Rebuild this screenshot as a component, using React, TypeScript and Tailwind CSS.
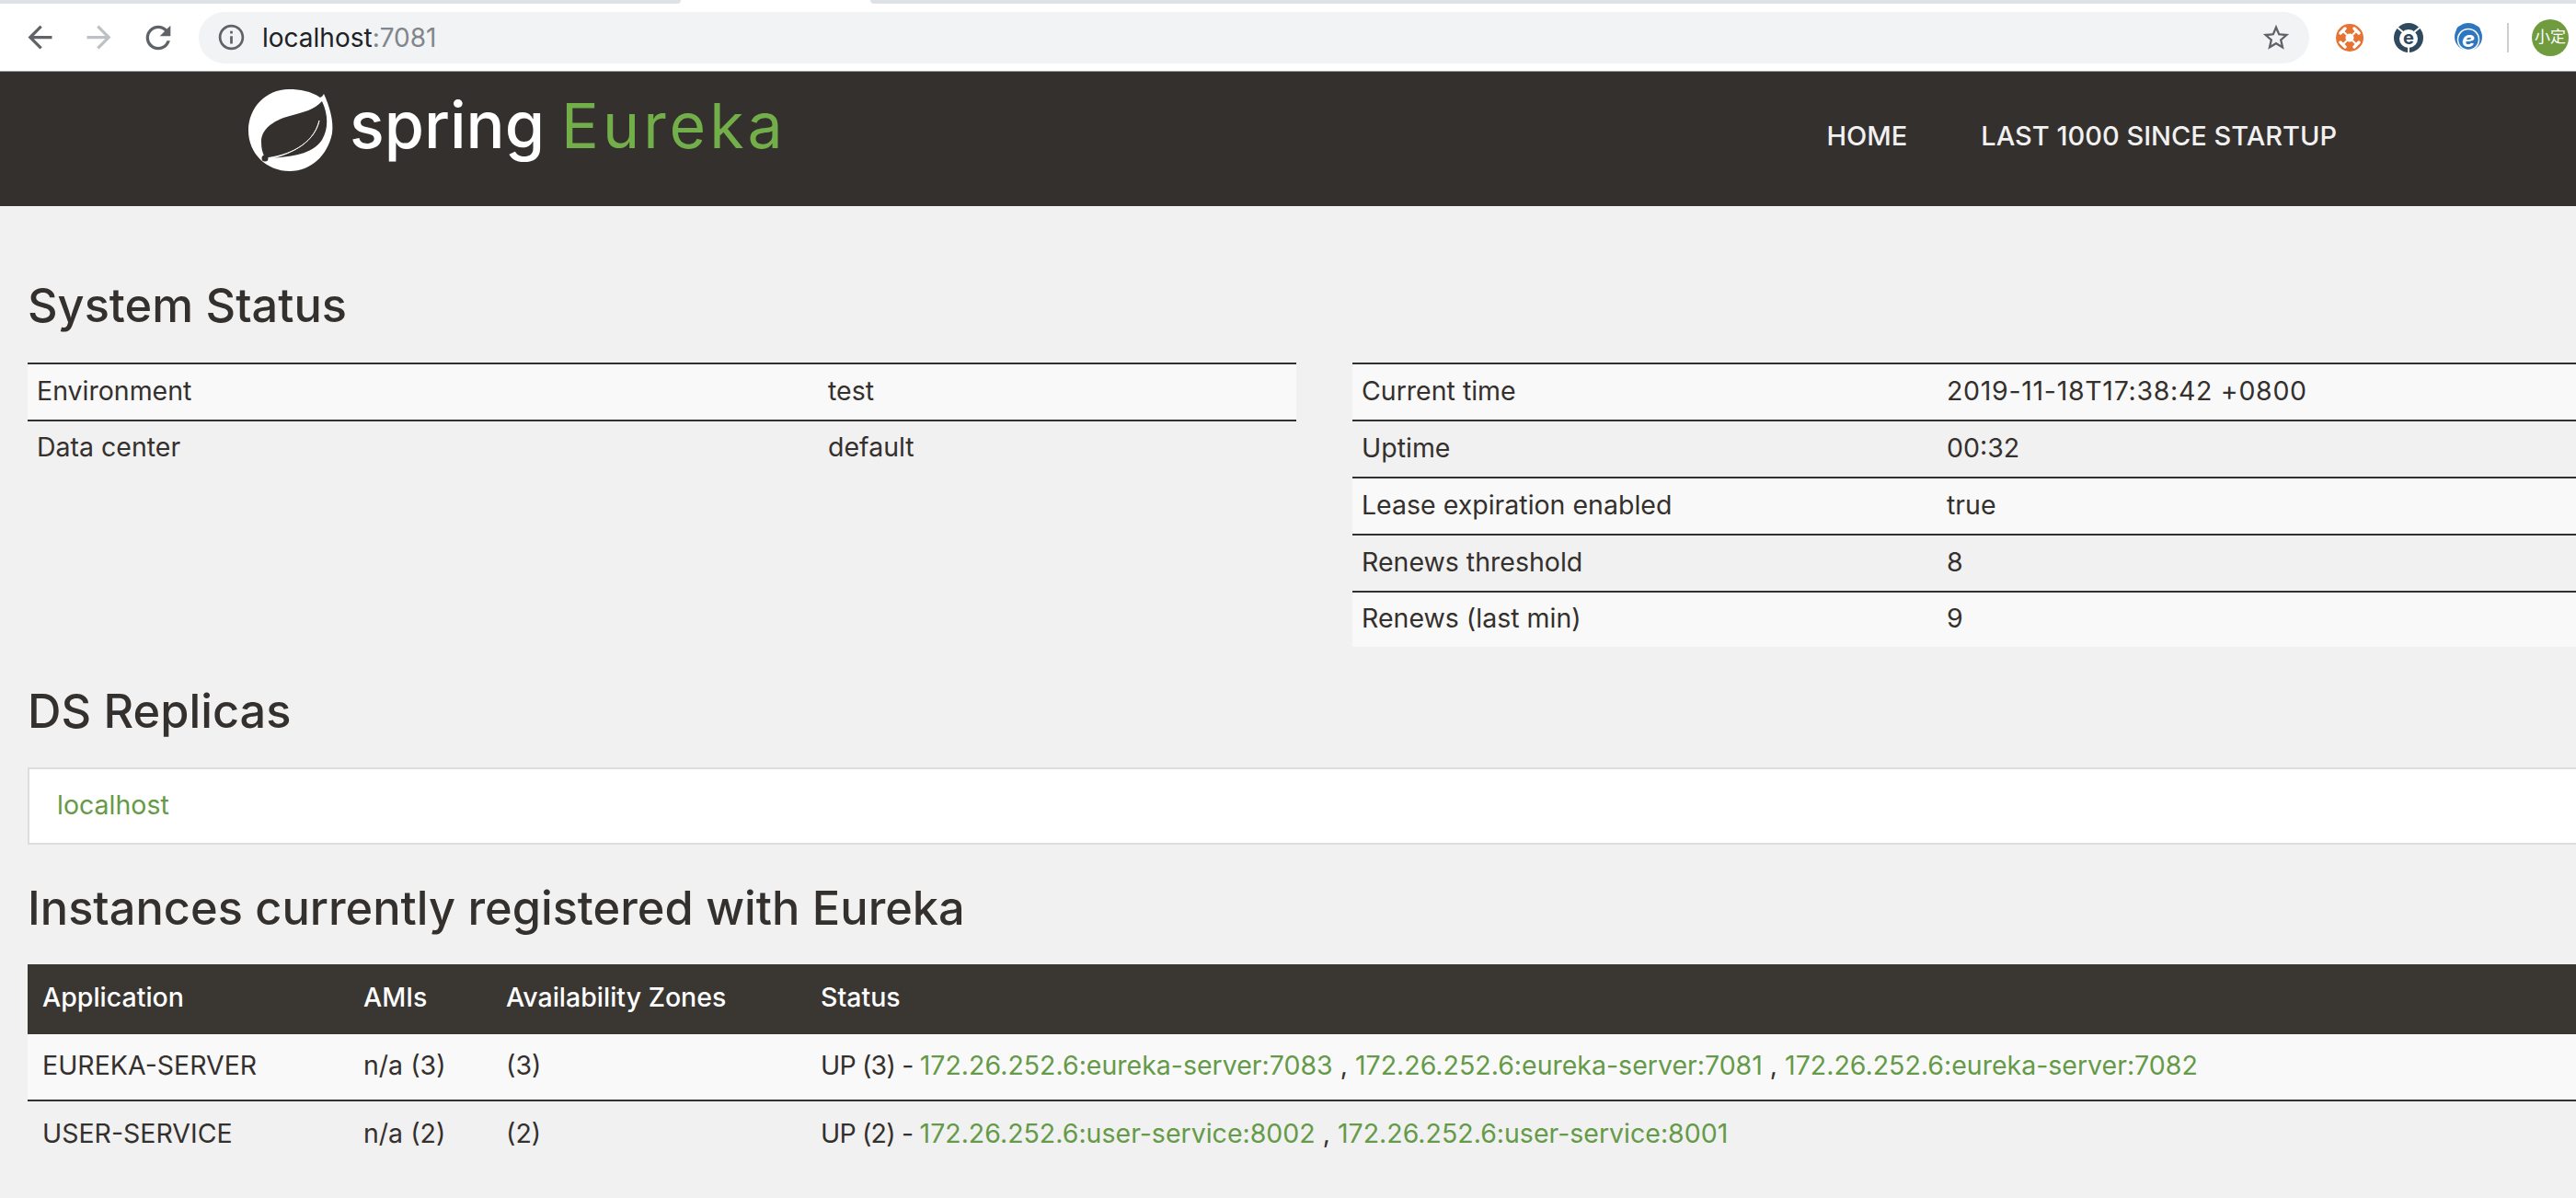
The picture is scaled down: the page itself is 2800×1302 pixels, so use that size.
import { MdArrowBack, MdArrowForward, MdRefresh, MdInfoOutline, MdStarBorder } from "react-icons/md";

const leftRows = [
  ["Environment", "test"],
  ["Data center", "default"],
];

const rightRows = [
  ["Current time", "2019-11-18T17:38:42 +0800", "tracking-[0.7px]"],
  ["Uptime", "00:32"],
  ["Lease expiration enabled", "true"],
  ["Renews threshold", "8"],
  ["Renews (last min)", "9"],
];

const linkClass = "text-[#659a48]";
const headingClass = "text-[50.5px] leading-[60px] font-medium";

function SpringLeaf() {
  return (
    <svg width={110} height={105} viewBox="0 0 110 105" className="shrink-0 mb-[20px]">
      <path
        d="M92 13C91 15 90 16 88 17C78 10 66 8 54 8C29 8 10 28 10 53C10 78 30 97 55 97C78 97 96 80 101 56C103 42 98 26 92 13Z"
        fill="#fff"
      />
      <path
        d="M90 21C82 30 70 33 55 37C36 42 24 52 24 65C24 72 25 77 28 82L35 83C56 81 80 79 90 63C97 51 97 36 90 21Z"
        fill="#34302d"
      />
      <path d="M28 83C52 80 80 70 87 42C83 64 58 78 36 83Z" fill="#fff" stroke="#fff" strokeWidth="0.8" />
      <circle cx="28" cy="83" r="3.5" fill="#34302d" />
    </svg>
  );
}

function ExtensionIcons() {
  return (
    <>
      <svg width={30} height={30} viewBox="0 0 30 30" className="ml-[29px] shrink-0">
        <circle cx="15" cy="15" r="15" fill="#e67233" />
        <circle cx="15" cy="15" r="4.5" fill="#fff" />
        <path d="M8 8L12 12M22 8L18 12M8 22L12 18M22 22L18 18" stroke="#fff" strokeWidth="2" />
        <path d="M5 10L10 5M20 5L25 10M5 20L10 25M20 25L25 20" stroke="#fff" strokeWidth="3.5" strokeLinecap="round" />
      </svg>
      <svg width={32} height={32} viewBox="0 0 32 32" className="ml-[33px] shrink-0">
        <circle cx="16" cy="16" r="16" fill="#2f4a5e" />
        <circle cx="16" cy="17" r="10" fill="#fff" />
        <path d="M4 5L10 10M28 5L22 10M16 26V32" stroke="#fff" strokeWidth="2" />
        <text x="16" y="23" textAnchor="middle" fontSize="20" fontWeight="700" fill="#2f4a5e" fontFamily="Inter, sans-serif">e</text>
      </svg>
      <svg width={34} height={32} viewBox="0 0 34 32" className="ml-[32px] shrink-0">
        <circle cx="9" cy="8" r="5" fill="#2f76c0" />
        <circle cx="25" cy="8" r="5" fill="#2f76c0" />
        <circle cx="17" cy="15" r="15" fill="#2f76c0" />
        <circle cx="17" cy="18" r="11.5" fill="none" stroke="#fff" strokeWidth="1.5" />
        <text x="17" y="26" textAnchor="middle" fontSize="24" fontStyle="italic" fontWeight="700" fill="#fff" fontFamily="Inter, sans-serif">e</text>
      </svg>
    </>
  );
}

function StatusTable({ rows, valueWidth, className }: { rows: string[][]; valueWidth: string; className: string }) {
  return (
    <table className={`border-collapse table-fixed ${className}`}>
      <tbody>
        {rows.map((row, i) => (
          <tr key={row[0]} className={`h-[62px] last:h-[60px] border-t-2 border-[#34302d] ${i % 2 === 0 ? "bg-[#f9f9f9]" : ""}`}>
            <td className="pl-[10px] pb-[2px]">{row[0]}</td>
            <td className={`pb-[2px] ${valueWidth} ${row[2] ?? ""}`}>{row[1]}</td>
          </tr>
        ))}
      </tbody>
    </table>
  );
}

export default function App() {
  return (
    <div className="w-[2800px] h-[1302px] overflow-hidden bg-[#f1f1f1] text-[#34302d] text-[28.5px] font-['Inter','Noto_Sans_CJK_SC',sans-serif]">
      {/* browser chrome */}
      <div className="flex h-[4px] bg-white">
        <div className="w-[740px] bg-[#dee1e6] rounded-br-[4px]" />
        <div className="ml-auto w-[1854px] bg-[#dee1e6] rounded-bl-[4px]" />
      </div>
      <div className="h-[73px] bg-white flex items-center pl-[24px]">
        <MdArrowBack size={39} className="text-[#5f6368] shrink-0" />
        <MdArrowForward size={39} className="ml-[25px] text-[#bdc1c6] shrink-0" />
        <MdRefresh size={40} className="ml-[25px] text-[#5f6368] shrink-0" />
        <div className="ml-[24px] w-[2294px] h-[56px] shrink-0 rounded-full bg-[#f1f3f4] flex items-center pl-[19px] pr-[19px]">
          <MdInfoOutline size={33} className="text-[#5f6368]" />
          <span className="ml-[17px] text-[28px] text-[#202124]">localhost<span className="text-[#80868b]">:7081</span></span>
          <MdStarBorder size={34} className="ml-auto text-[#5f6368]" />
        </div>
        <ExtensionIcons />
        <div className="ml-[25px] w-[2px] h-[32px] bg-[#cfcfcf] shrink-0" />
        <div className="ml-[25px] w-[40px] h-[40px] shrink-0 rounded-full bg-[#709c3f] flex items-center justify-center text-white text-[17px] whitespace-nowrap">小定</div>
      </div>

      {/* navbar */}
      <div className="h-[147px] bg-[#34302d] border-t border-[#999] flex items-center pl-[260px]">
        <SpringLeaf />
        <span className="ml-[10px] mb-[30px] text-white text-[70px] leading-none font-medium">spring</span>
        <span className="ml-[18px] mb-[30px] text-[#72ae49] text-[68px] leading-none tracking-[4px]">Eureka</span>
        <div className="ml-auto mr-[260px] mb-[6px] flex gap-[80px] text-[#f1f1f1] text-[29px] font-medium">
          <span>HOME</span>
          <span>LAST 1000 SINCE STARTUP</span>
        </div>
      </div>

      <div className="pl-[30px]">
        <h1 className={`mt-[78px] ${headingClass}`}>System Status</h1>
        <div className="mt-[32px] flex gap-[61px]">
          <StatusTable rows={leftRows} valueWidth="w-[509px]" className="w-[1379px] self-start" />
          <StatusTable rows={rightRows} valueWidth="w-[684px]" className="w-[1330px]" />
        </div>
        <h1 className={`mt-[40px] ${headingClass}`}>DS Replicas</h1>
        <div className="mt-[31px] h-[84px] bg-white border-2 border-[#ddd] border-r-0 flex items-center pl-[30px] pb-[2px]">
          <a className={linkClass}>localhost</a>
        </div>
        <h1 className={`mt-[39px] ${headingClass}`}>Instances currently registered with Eureka</h1>
        <table className="mt-[31px] w-[2770px] table-fixed border-collapse">
          <thead>
            <tr className="h-[76px] bg-[#3a3632] text-white text-left">
              <th className="pl-[16px] pb-[3px] w-[365px] font-medium">Application</th>
              <th className="pb-[3px] w-[155px] font-medium">AMIs</th>
              <th className="pb-[3px] w-[342px] font-medium">Availability Zones</th>
              <th className="pb-[3px] font-medium">Status</th>
            </tr>
          </thead>
          <tbody>
            <tr className="h-[72px] bg-[#f9f9f9] border-b-2 border-[#34302d]">
              <td className="pl-[16px] pb-[2px]">EUREKA-SERVER</td>
              <td className="pb-[2px]">n/a (3)</td>
              <td className="pb-[2px]">(3)</td>
              <td className="pb-[2px]">
                <span className="tracking-[-0.8px]">UP (3) - </span><a className={linkClass}>172.26.252.6:eureka-server:7083</a> , <a className={linkClass}>172.26.252.6:eureka-server:7081</a> , <a className={linkClass}>172.26.252.6:eureka-server:7082</a>
              </td>
            </tr>
            <tr className="h-[74px]">
              <td className="pl-[16px] pb-[2px]">USER-SERVICE</td>
              <td className="pb-[2px]">n/a (2)</td>
              <td className="pb-[2px]">(2)</td>
              <td className="pb-[2px]">
                <span className="tracking-[-0.8px]">UP (2) - </span><a className={linkClass}>172.26.252.6:user-service:8002</a> , <a className={linkClass}>172.26.252.6:user-service:8001</a>
              </td>
            </tr>
          </tbody>
        </table>
      </div>
    </div>
  );
}
